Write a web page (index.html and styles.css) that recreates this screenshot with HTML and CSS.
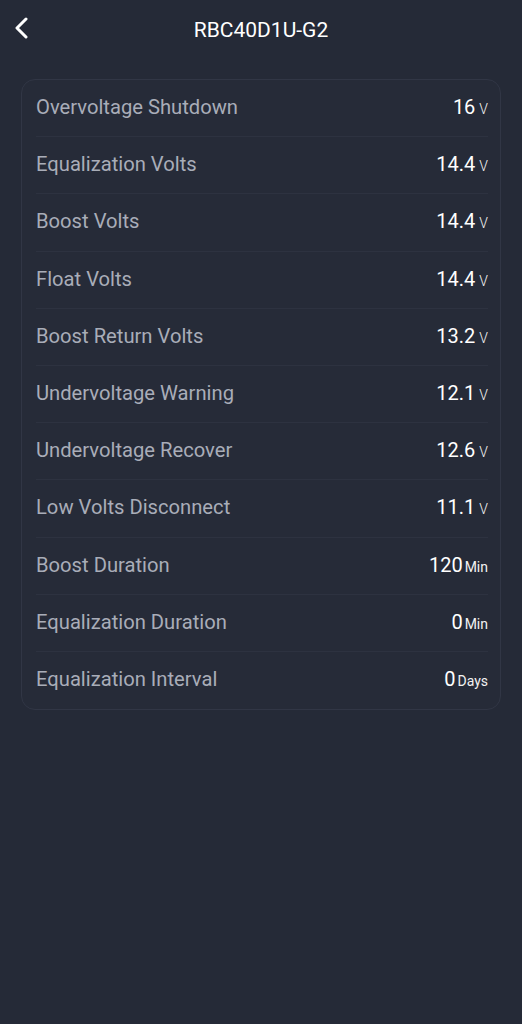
FILE: index.html
```html
<!DOCTYPE html>
<html>
<head>
<meta charset="utf-8">
<link rel="stylesheet" href="styles.css">
</head>
<body>
<header class="topbar">
  <svg class="back" width="16" height="22" viewBox="0 0 16 22"><path d="M12 2 L3 11 L12 20" fill="none" stroke="#ffffff" stroke-width="3" stroke-linecap="round" stroke-linejoin="round"/></svg>
  <h1 class="title">RBC40D1U-G2</h1>
</header>
<main class="card">
  <div class="row"><span class="label">Overvoltage Shutdown</span><span class="value">16<span class="unit v">V</span></span></div>
  <div class="row"><span class="label">Equalization Volts</span><span class="value">14.4<span class="unit v">V</span></span></div>
  <div class="row"><span class="label">Boost Volts</span><span class="value">14.4<span class="unit v">V</span></span></div>
  <div class="row"><span class="label">Float Volts</span><span class="value">14.4<span class="unit v">V</span></span></div>
  <div class="row"><span class="label">Boost Return Volts</span><span class="value">13.2<span class="unit v">V</span></span></div>
  <div class="row"><span class="label">Undervoltage Warning</span><span class="value">12.1<span class="unit v">V</span></span></div>
  <div class="row"><span class="label">Undervoltage Recover</span><span class="value">12.6<span class="unit v">V</span></span></div>
  <div class="row"><span class="label">Low Volts Disconnect</span><span class="value">11.1<span class="unit v">V</span></span></div>
  <div class="row"><span class="label">Boost Duration</span><span class="value">120<span class="unit">Min</span></span></div>
  <div class="row"><span class="label">Equalization Duration</span><span class="value">0<span class="unit">Min</span></span></div>
  <div class="row"><span class="label">Equalization Interval</span><span class="value">0<span class="unit">Days</span></span></div>
</main>
</body>
</html>
```
FILE: styles.css
```css
html, body {
  margin: 0;
  padding: 0;
  background: #252a37;
  font-family: Roboto, "Noto Sans", sans-serif;
  height: 100%;
}
.topbar {
  position: relative;
  height: 60px;
  display: flex;
  align-items: center;
  justify-content: center;
}
.back {
  position: absolute;
  left: 14px;
  top: 17px;
}
.title {
  margin: 0;
  font-size: 21px;
  font-weight: 400;
  color: #ffffff;
}
.card {
  margin: 19px 21px 0 21px;
  border: 1px solid #313645;
  border-radius: 14px;
  background: #262b38;
  padding: 0 12px 0 14px;
}
.row {
  height: 57.2px;
  display: flex;
  align-items: center;
  justify-content: space-between;
  border-bottom: 1px solid #2d3240;
  box-sizing: border-box;
  padding-bottom: 2px;
}
.row:last-child {
  border-bottom: none;
}
.label {
  font-size: 20.2px;
  color: #a9adb8;
}
.value {
  font-size: 20px;
  color: #ffffff;
  display: flex;
  align-items: baseline;
}
.unit {
  font-size: 14px;
  margin-left: 2px;
  color: #f2f2f2;
}
.unit.v {
  font-weight: 300;
  margin-left: 4px;
}
```
